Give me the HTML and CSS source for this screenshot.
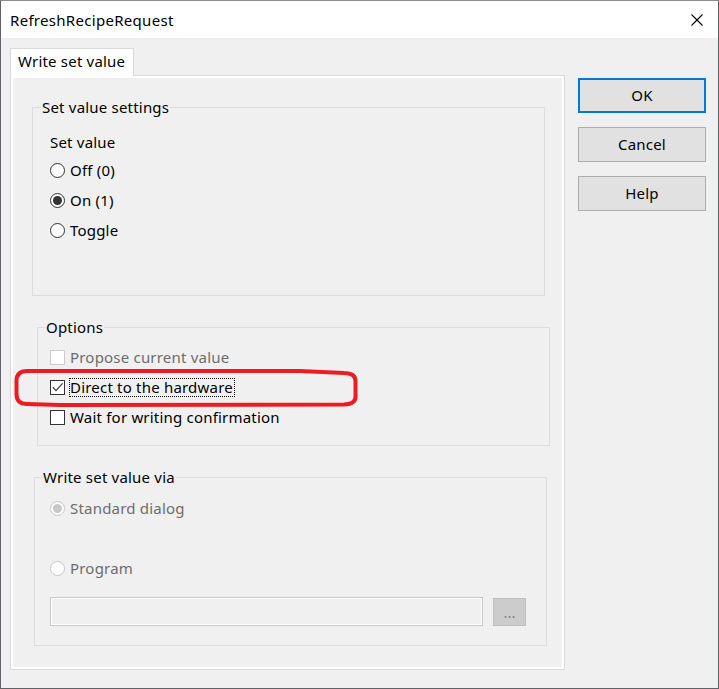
FILE: index.html
```html
<!DOCTYPE html>
<html>
<head>
<meta charset="utf-8">
<link rel="stylesheet" href="styles.css">
</head>
<body>
<div class="window">
  <div class="titlebar">
    <span class="title">RefreshRecipeRequest</span>
    <span class="close">
      <svg width="12" height="12" viewBox="0 0 12 12"><path d="M0.5 0.5 L11.5 11.5 M11.5 0.5 L0.5 11.5" stroke="#000" stroke-width="1.1" fill="none"/></svg>
    </span>
  </div>
  <div class="main">
    <div class="tabs">
      <div class="tabstrip"><div class="tab">Write set value</div></div>
      <div class="panel">
        <div class="panel-inner">
          <fieldset class="group g1">
            <legend>Set value settings</legend>
            <div class="content c1">
              <div class="row label">Set value</div>
              <div class="rows">
                <label class="row"><span class="rb"></span>Off (0)</label>
                <label class="row"><span class="rb checked"></span>On (1)</label>
                <label class="row"><span class="rb"></span>Toggle</label>
              </div>
            </div>
          </fieldset>

          <fieldset class="group g2">
            <legend>Options</legend>
            <div class="content c2">
              <label class="row disabled"><span class="cb dis"></span>Propose current value</label>
              <label class="row"><span class="cb"><svg width="13" height="13" viewBox="0 0 13 13"><path d="M1.8 6.2 L5 9.6 L11.6 2.4" stroke="#3a3a3a" stroke-width="1.2" fill="none"/></svg></span><span class="focus">Direct to the hardware</span></label>
              <label class="row"><span class="cb"></span>Wait for writing confirmation</label>
            </div>
          </fieldset>

          <fieldset class="group g3">
            <legend>Write set value via</legend>
            <div class="content c3">
              <label class="row disabled"><span class="rb dis checked"></span>Standard dialog</label>
              <label class="row disabled prog"><span class="rb dis"></span>Program</label>
              <div class="pathrow">
                <div class="edit"></div>
                <div class="browse">...</div>
              </div>
            </div>
          </fieldset>
        </div>
      </div>
    </div>
    <div class="buttons">
      <div class="btn default">OK</div>
      <div class="btn">Cancel</div>
      <div class="btn">Help</div>
    </div>
  </div>
  <svg class="annot" width="719" height="689" viewBox="0 0 719 689">
    <path d="M27 371 L300 371 L344 373 Q355.5 373 355.5 381 L355.5 397 Q355.5 404 344 404.5 L60 405 L27 404 Q16.5 404 16.5 394 L16.5 381 Q16.5 371 27 371 Z" stroke="#ed1c24" stroke-width="4" fill="none"/>
  </svg>
</div>
</body>
</html>
```

FILE: styles.css
```css
* { box-sizing: border-box; }

body {
  margin: 0;
  font-family: "Noto Sans", "Open Sans", sans-serif;
  font-size: 15px;
  letter-spacing: 0.2px;
  color: #000;
}

.window {
  position: relative;
  width: 719px;
  height: 689px;
  border: 1px solid #5f6368;
  border-top-color: #8c8c8c;
  background: #f0f0f0;
  display: flex;
  flex-direction: column;
}

.titlebar {
  height: 37px;
  background: #fff;
  display: flex;
  align-items: center;
  justify-content: space-between;
  padding: 0 15px 0 9px;
  line-height: 20px;
}

.title { letter-spacing: 0.3px; }

.close {
  display: flex;
  width: 12px;
  height: 12px;
}

.main {
  flex: 1;
  display: flex;
  gap: 13px;
  padding: 10px 0 0 9px;
}

.tabs {
  width: 555px;
  display: flex;
  flex-direction: column;
}

.tabstrip {
  display: flex;
}

.tab {
  width: 124px;
  height: 28px;
  border: 1px solid #d9d9d9;
  border-bottom: none;
  background: #fff;
  padding-left: 7px;
  line-height: 24px;
  margin-bottom: -1px;
  position: relative;
  z-index: 1;
}

.panel {
  height: 595px;
  border: 1px solid #d9d9d9;
  background: #fff;
  padding: 2px;
}

.panel-inner {
  height: 100%;
  background: #f0f0f0;
  padding-top: 19px;
  display: flex;
  flex-direction: column;
  align-items: flex-start;
}

.group {
  margin: 0;
  padding: 0;
  min-width: 0;
  width: 513px;
  border: 1px solid #dcdcdc;
}

.group legend {
  margin-left: 8px;
  padding: 0 1px;
  line-height: 20px;
}

.g1 { margin-left: 19px; }
.g2 { margin-left: 24px; margin-top: 21px; }
.g3 { margin-left: 21px; margin-top: 21px; }
.g2 legend, .g3 legend { margin-left: 7px; }

.content {
  display: flex;
  flex-direction: column;
}

.c1 { padding: 15px 0 55px 17px; }
.c2 { padding: 10px 0 18px 12px; gap: 10px; }
.c3 { padding: 11px 0 19px 15px; }

.rows {
  display: flex;
  flex-direction: column;
  gap: 10px;
  margin-top: 8px;
}

.row {
  display: flex;
  align-items: center;
  gap: 5px;
  height: 20px;
  line-height: 20px;
  white-space: nowrap;
}

.disabled { color: #6d6d6d; }

.rb {
  width: 15px;
  height: 15px;
  border: 1px solid #333;
  border-radius: 50%;
  background: #fff;
  display: flex;
  align-items: center;
  justify-content: center;
  flex: none;
}

.rb.checked::after {
  content: "";
  width: 9px;
  height: 9px;
  border-radius: 50%;
  background: #333;
}

.rb.dis { border-color: #c4c4c4; }
.rb.dis.checked::after {
  width: 9px;
  height: 9px;
  background: #c8c8c8;
}

.cb {
  width: 15px;
  height: 15px;
  border: 1px solid #333;
  background: #fff;
  display: flex;
  flex: none;
}

.cb.dis { border-color: #cccccc; }

.focus {
  display: block;
  height: 19px;
  line-height: 17px;
  border: 1px dotted #000;
  margin-left: -1px;
  padding-right: 1px;
}

.prog { margin-top: 40px; }

.pathrow {
  display: flex;
  align-items: flex-end;
  gap: 10px;
  margin-top: 19px;
}

.edit {
  width: 433px;
  height: 29px;
  border: 1px solid #c8c8c8;
  background: #f0f0f0;
  box-shadow: inset 0 0 0 1px #fff;
}

.browse {
  width: 33px;
  height: 28px;
  border: 1px solid #bfbfbf;
  background: #cccccc;
  color: #838383;
  text-align: center;
  line-height: 26px;
  letter-spacing: 0;
}

.buttons {
  display: flex;
  flex-direction: column;
  gap: 14px;
  margin-top: 30px;
}

.btn {
  width: 128px;
  height: 35px;
  border: 1px solid #adadad;
  background: #e1e1e1;
  display: flex;
  align-items: center;
  justify-content: center;
  line-height: 20px;
  padding-bottom: 1px;
}

.btn.default {
  border: 2px solid #0078d7;
}

.annot {
  position: absolute;
  left: -1px;
  top: -1px;
  pointer-events: none;
}
```
